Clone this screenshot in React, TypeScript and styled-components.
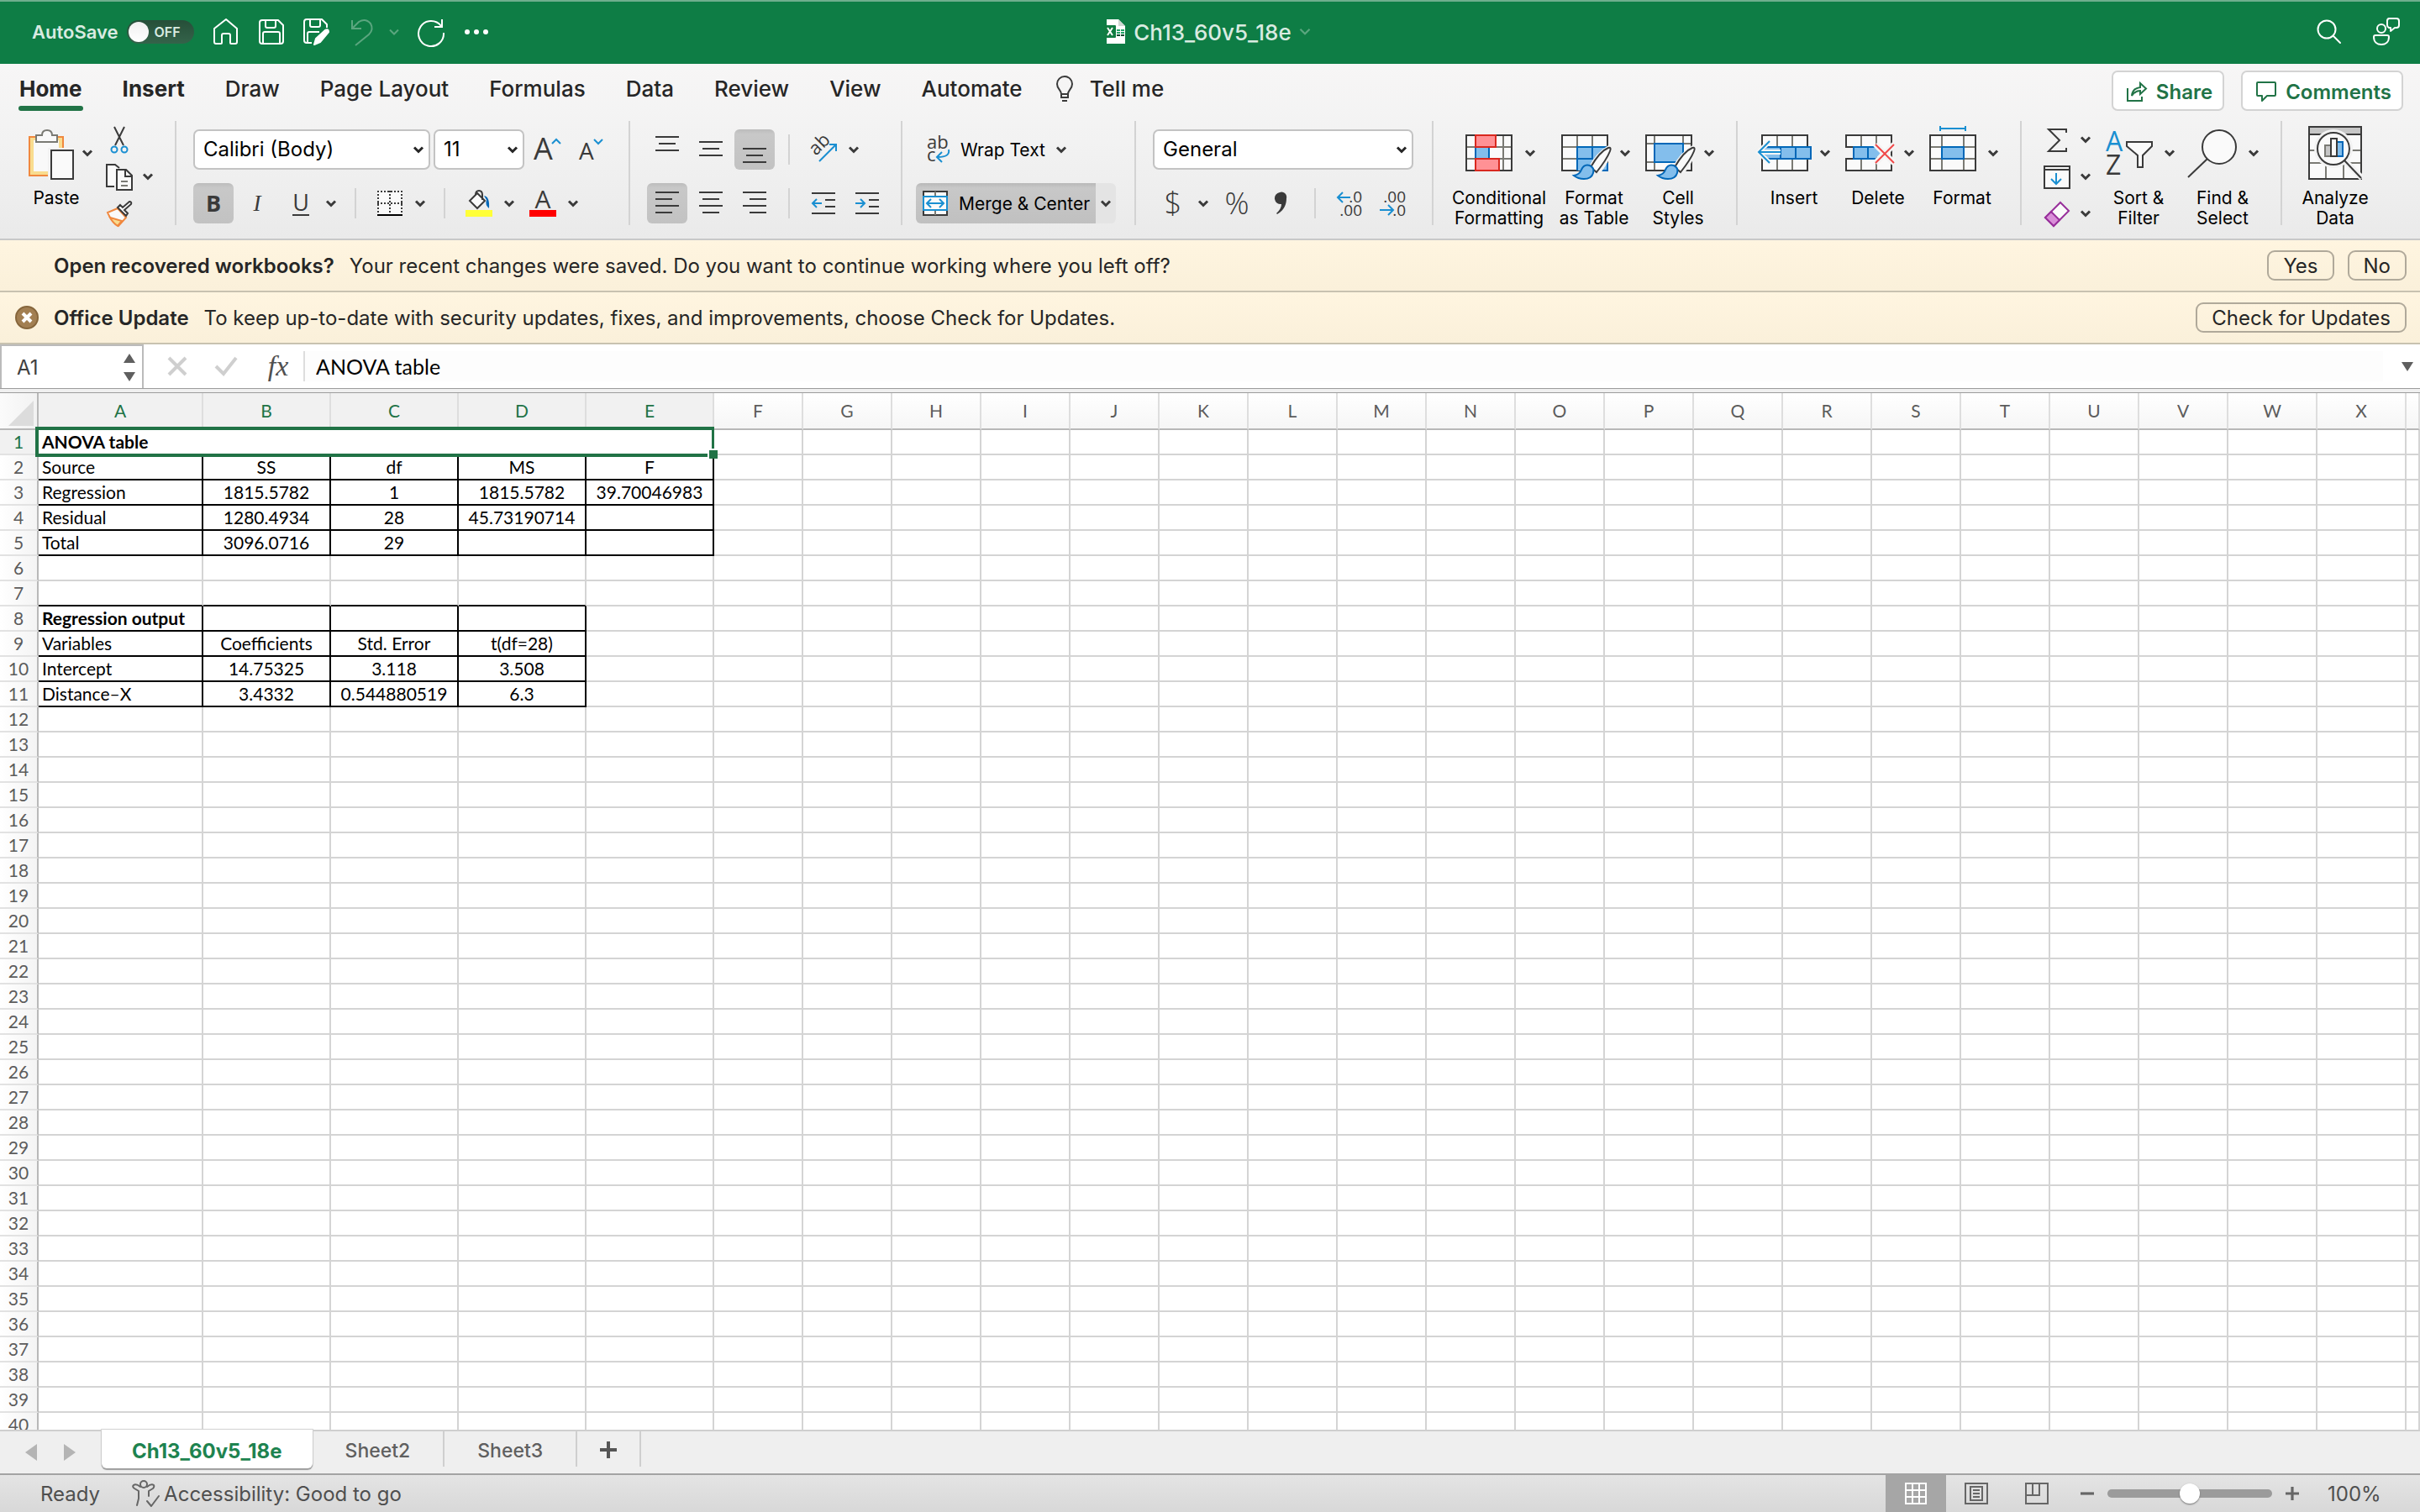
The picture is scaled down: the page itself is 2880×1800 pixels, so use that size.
import React from 'react';
import styled, { createGlobalStyle, css } from 'styled-components';

const UI = 'Inter, "Liberation Sans", sans-serif';
const CELL = 'Lato, "Liberation Sans", sans-serif';
const TOOL = '"Open Sans", "Noto Sans", sans-serif';
const GREEN = '#217346';
const INK = '#3a3a3a';
const BLUE = '#1a8fd1';
const EDGE = '#0067b8';
const SKY = '#83beec';

const GlobalStyle = createGlobalStyle`
  *, *::before, *::after { box-sizing: border-box; }
  body { margin: 0; font-family: ${UI}; font-size: 24px; color: #262626; background: #fff; }
  button, input, select { font: inherit; color: inherit; margin: 0; padding: 0; }
  button { border: 0; background: none; }
  svg { display: block; flex: none; overflow: visible; }
`;

/* ---------- window ---------- */

const Window = styled.div`
  display: flex;
  flex-direction: column;
  height: 100vh;
  overflow: hidden;
`;

const TitleBar = styled.header`
  display: grid;
  grid-template-columns: 1fr auto 1fr;
  align-items: center;
  height: 76px;
  flex: none;
  padding: 0 24px 0 38px;
  background: #0e7d45;
  box-shadow: inset 0 2px #6fae8d;
  color: #d9ebe1;
`;

const QuickAccess = styled.div`
  display: flex;
  align-items: center;
  gap: 22px;
`;

const AutoSave = styled.label`
  display: flex;
  align-items: center;
  gap: 10px;
  font-size: 22px;
  font-weight: 600;
`;

const Track = styled.span`
  display: flex;
  align-items: center;
  gap: 7px;
  width: 80px;
  height: 28px;
  padding: 0 2px;
  border-radius: 14px;
  background: linear-gradient(#264f39, #34634a);
  font-size: 16px;
`;

const Knob = styled.input`
  appearance: none;
  width: 24px;
  height: 24px;
  border-radius: 50%;
  background: linear-gradient(#f0f0f0, #fff);
`;

const IconButton = styled.button<{ $dim?: boolean }>`
  display: flex;
  align-items: center;
  justify-content: center;
  width: 32px;
  height: 36px;
  color: ${p => (p.$dim ? '#5ba67f' : '#fff')};
`;

const UndoPair = styled.div`
  display: flex;
  gap: 16px;
`;

const SmallArrow = styled(IconButton)`
  width: 12px;
`;

const DocTitle = styled.h1`
  display: flex;
  align-items: center;
  gap: 8px;
  margin: 0;
  padding-right: 20px;
  font-size: 26px;
  font-weight: 500;
`;

const TitleActions = styled.div`
  display: flex;
  justify-content: flex-end;
  gap: 36px;
`;

/* ---------- ribbon ---------- */

const Ribbon = styled.section`
  flex: none;
  height: 210px;
  background: linear-gradient(#f7f6f6, #f2f2f2 45%, #eaeaea);
  border-bottom: 2px solid #c8c8c8;
`;

const TabRow = styled.nav`
  display: flex;
  align-items: flex-start;
  height: 68px;
  padding: 0 20px 0 22px;
`;

const TabList = styled.div`
  display: flex;
  gap: 46px;
`;

const Tab = styled.button<{ $active?: boolean; $strong?: boolean }>`
  height: 56px;
  padding: 4px 1px 0;
  font-size: 26px;
  line-height: 30px;
  font-weight: ${p => (p.$active || p.$strong ? 700 : 500)};
  display: flex;
  align-items: center;
  gap: 19px;
  position: relative;
  white-space: nowrap;
  ${p =>
    p.$active &&
    css`
      &::after {
        content: '';
        position: absolute;
        left: 0;
        right: 0;
        bottom: 0;
        height: 6px;
        border-radius: 3px;
        background: ${GREEN};
      }
    `}
`;

const TellMe = styled(Tab)`
  margin-left: 37px;
`;

const TabActions = styled.div`
  display: flex;
  gap: 20px;
  margin-left: auto;
  padding-top: 8px;
`;

const OutlineButton = styled.button`
  display: flex;
  align-items: center;
  gap: 10px;
  height: 48px;
  padding: 2px 12px 0 15px;
  border: 2px solid #d3d3d3;
  border-radius: 7px;
  background: #fff;
  color: ${GREEN};
  font-size: 24px;
  font-weight: 600;
`;

const Groups = styled.div`
  display: flex;
  align-items: flex-start;
  height: 132px;
`;

const Group = styled.div<{ $left: number; $right: number; $gap?: number }>`
  display: flex;
  gap: ${p => p.$gap ?? 14}px;
  padding: 6px ${p => p.$right}px 0 ${p => p.$left}px;
`;

const GroupRule = styled.span`
  width: 2px;
  height: 124px;
  flex: none;
  background: #d3d3d3;
`;

const Rows = styled.div`
  display: flex;
  flex-direction: column;
  gap: 16px;
  padding-top: 4px;
`;

const Row = styled.div<{ $gap?: number }>`
  display: flex;
  align-items: center;
  gap: ${p => p.$gap ?? 4}px;
  height: 48px;
`;

const Stack = styled.div`
  display: flex;
  flex-direction: column;
  gap: 11px;
`;

const StackRow = styled.div`
  display: flex;
  align-items: center;
  gap: 12px;
  height: 33px;
`;

const PlainButton = styled.button`
  display: flex;
  align-items: center;
  justify-content: center;
`;

const ToolButton = styled.button<{ $on?: boolean; $bold?: boolean }>`
  display: flex;
  align-items: center;
  justify-content: center;
  width: 48px;
  height: 48px;
  flex: none;
  border-radius: 6px;
  color: ${INK};
  font-family: ${TOOL};
  font-size: 27px;
  font-weight: ${p => (p.$bold ? 700 : 400)};
  ${p => p.$on && css`background: linear-gradient(#bcbcbc, #c8c8c8 12%, #c2c2c2);`}
`;

const Glyph = styled.span<{ $italic?: boolean; $line?: boolean; $large?: boolean }>`
  line-height: 28px;
  font-family: ${p => (p.$italic ? '"Liberation Serif", serif' : 'inherit')};
  font-style: ${p => (p.$italic ? 'italic' : 'normal')};
  font-size: ${p => (p.$large ? 36 : 27)}px;
  font-weight: ${p => (p.$large ? 300 : 'inherit')};
  border-bottom: ${p => (p.$line ? '2px solid ' + INK : '0')};
`;

const Split = styled.div`
  display: flex;
  align-items: center;
`;

const Arrow = styled.button`
  display: flex;
  align-items: center;
  justify-content: center;
  width: 24px;
  height: 48px;
  color: ${INK};
`;

const RowRule = styled.span`
  width: 2px;
  height: 36px;
  margin: 0 12px;
  background: #d3d3d3;
`;

const Picker = styled.label<{ $width: number }>`
  display: block;
  position: relative;
  width: ${p => p.$width}px;
`;

const PickerArrow = styled.span`
  position: absolute;
  right: 8px;
  top: 20px;
  pointer-events: none;
`;

const Select = styled.select`
  appearance: none;
  width: 100%;
  height: 48px;
  padding: 0 30px 2px 10px;
  border: 2px solid #c3c3c3;
  border-radius: 7px;
  background: #fff;
  color: #000;
  font-size: 24px;
`;

const WideButton = styled.button<{ $on?: boolean }>`
  display: flex;
  align-items: center;
  gap: 13px;
  height: 48px;
  padding: 0 7px 0 8px;
  color: #000;
  font-size: 21px;
  white-space: nowrap;
  border-radius: 6px 0 0 6px;
  ${p => p.$on && css`background: linear-gradient(#b8b8b8, #c8c8c8 12%, #c0c0c0);`}
`;

const MergeArrow = styled(Arrow)`
  background: #e4e4e4;
  border-radius: 0 6px 6px 0;
`;

const Big = styled.button<{ $width?: number }>`
  display: flex;
  flex-direction: column;
  align-items: center;
  gap: 10px;
  width: ${p => p.$width ?? 86}px;
  color: #000;
  font-size: 21px;
  line-height: 24px;
`;

const BigFace = styled.span`
  display: flex;
  align-items: center;
  gap: 10px;
  color: ${INK};
`;

const BigLabel = styled.span`
  white-space: pre;
  text-align: center;
`;

/* ---------- message bars ---------- */

const MessageBar = styled.div`
  display: flex;
  align-items: center;
  gap: 18px;
  height: 62px;
  flex: none;
  padding: 0 16px 0 18px;
  background: linear-gradient(#fff5e0, #faf0da);
  border-bottom: 2px solid #c8c2b0;
  font-size: 24px;
  line-height: 28px;
`;

const MessageSlot = styled.button`
  width: 28px;
  height: 28px;
`;

const MessageTitle = styled.strong`
  padding-top: 2px;
  font-weight: 600;
`;

const MessageText = styled.span`
  padding-top: 2px;
`;

const MessageActions = styled.div`
  display: flex;
  gap: 16px;
  margin-left: auto;
`;

const PillButton = styled.button`
  height: 36px;
  padding: 1px 17px 0;
  border: 2px solid #b0a99a;
  border-radius: 9px;
  font-size: 24px;
  line-height: 31px;
`;

/* ---------- formula bar ---------- */

const FormulaBar = styled.div`
  display: flex;
  align-items: center;
  height: 52px;
  flex: none;
  background: #fff;
`;

const NameBox = styled.div`
  display: flex;
  align-items: center;
  width: 171px;
  height: 52px;
  padding: 0 8px 0 18px;
  border: 2px solid #bbb;
  border-bottom: 0;
  color: #404040;
`;

const NameInput = styled.input`
  flex: 1;
  min-width: 0;
  border: 0;
  outline: 0;
  background: none;
  font-size: 24px;
`;

const FormulaTools = styled.div`
  display: flex;
  align-items: center;
  gap: 32px;
  padding: 0 14px 0 28px;
`;

const FxButton = styled.button`
  width: 32px;
  color: #505050;
  font-family: "Liberation Serif", serif;
  font-style: italic;
  font-size: 34px;
  line-height: 40px;
`;

const FormulaInput = styled.input`
  flex: 1;
  min-width: 0;
  height: 36px;
  padding-left: 13px;
  border: 0;
  border-left: 2px solid #ddd;
  outline: 0;
  background: #fdfdfd;
  font-family: ${CELL};
  font-size: 25px;
  color: #000;
`;

const Expand = styled.button`
  padding: 0 8px 0 22px;
`;

const SplitBar = styled.div`
  height: 6px;
  flex: none;
  background: #f0f0f0;
  border-top: 1px solid #9c9c9c;
  border-bottom: 1px solid #9c9c9c;
`;

/* ---------- sheet ---------- */

const SheetArea = styled.main`
  flex: 1;
  min-height: 0;
  overflow: hidden;
`;

const Grid = styled.table`
  width: 100%;
  table-layout: fixed;
  border-collapse: separate;
  border-spacing: 0;
  font-family: ${CELL};
  font-size: 21px;
  line-height: 26px;
  color: #000;
`;

const ColumnHead = styled.th<{ $selected?: boolean }>`
  height: 44px;
  padding: 0;
  font-weight: 400;
  color: ${p => (p.$selected ? GREEN : '#5c5c5c')};
  background: ${p => (p.$selected ? '#f1f1f1' : 'linear-gradient(#fff, #f6f6f6)')};
  border-right: 2px solid #dedede;
  border-bottom: 2px solid #b8b8b8;
`;

const Corner = styled.td`
  padding: 0;
  background: linear-gradient(90deg, #fbfbfb, #f2f2f2);
  border-right: 2px solid #b8b8b8;
  border-bottom: 2px solid #b8b8b8;
`;

const RowHead = styled.th<{ $selected?: boolean }>`
  height: 30px;
  padding: 0;
  font-weight: 400;
  color: ${p => (p.$selected ? GREEN : '#5c5c5c')};
  background: ${p => (p.$selected ? '#f1f1f1' : 'linear-gradient(90deg, #fff, #f4f4f4)')};
  border-right: 2px solid #b8b8b8;
  border-bottom: 2px solid #e2e2e2;
`;

const Cell = styled.td<{ $right?: boolean; $bottom?: boolean; $left?: boolean; $bold?: boolean; $selected?: boolean }>`
  height: 30px;
  padding: ${p => (p.$left ? '0 0 0 4px' : '0')};
  overflow: ${p => (p.$selected ? 'visible' : 'hidden')};
  white-space: nowrap;
  text-align: ${p => (p.$left ? 'left' : 'center')};
  font-weight: ${p => (p.$bold ? 700 : 400)};
  border-right: 2px solid ${p => (p.$right ? '#000' : '#d4d4d4')};
  border-bottom: 2px solid ${p => (p.$bottom ? '#000' : '#d4d4d4')};
  ${p =>
    p.$selected &&
    css`
      position: relative;
      &::before {
        content: '';
        position: absolute;
        inset: -4px -2px -4px -4px;
        border: 4px solid ${GREEN};
        border-right-width: 3px;
      }
      &::after {
        content: '';
        position: absolute;
        right: -6px;
        bottom: -6px;
        width: 12px;
        height: 12px;
        background: ${GREEN};
        border: solid #fff;
        border-width: 2px 0 0 2px;
      }
    `}
`;

/* ---------- sheet tabs ---------- */

const TabStrip = styled.footer`
  display: flex;
  align-items: flex-start;
  height: 52px;
  flex: none;
  border-top: 2px solid #cfcfcf;
  background: #efefef;
`;

const TabArrows = styled.div`
  display: flex;
  align-items: center;
  gap: 32px;
  height: 50px;
  padding: 0 31px 0 30px;
`;

const SheetTab = styled.button<{ $active?: boolean }>`
  height: 42px;
  padding: 4px 39px 0;
  color: #5f5f5f;
  font-size: 23px;
  font-weight: 500;
  border-right: 2px solid #cfcfcf;
  ${p =>
    p.$active &&
    css`
      height: 46px;
      margin-top: -2px;
      padding: 4px 36px 0;
      background: #fff;
      color: #1e8350;
      font-size: 24px;
      font-weight: 700;
      border: 0;
      border-radius: 0 0 6px 6px;
      box-shadow: 0 2px 1px #9d9d9d, 0 0 1px 1px #d0d0d0;
    `}
`;

const AddTab = styled(SheetTab)`
  padding: 2px 27px 0;
`;

const StatusBar = styled.footer`
  display: flex;
  align-items: center;
  height: 46px;
  flex: none;
  padding-left: 48px;
  border-top: 2px solid #a3a3a3;
  background: linear-gradient(#e4e4e4, #d8d8d8);
  color: #4f4f4f;
  font-size: 24px;
`;

const Access = styled.button`
  display: flex;
  align-items: center;
  gap: 4px;
  margin-left: 38px;
`;

const ViewControls = styled.div`
  display: flex;
  align-items: center;
  margin-left: auto;
`;

const ViewButton = styled.button<{ $on?: boolean }>`
  display: flex;
  align-items: center;
  justify-content: center;
  width: 72px;
  height: 44px;
  background: ${p => (p.$on ? '#a6a6a6' : 'none')};
`;

const ZoomButton = styled.button`
  display: flex;
  align-items: center;
  justify-content: center;
  width: 48px;
  height: 44px;
`;

const ZoomSlider = styled.input`
  appearance: none;
  width: 196px;
  height: 26px;
  background: none;
  &::-webkit-slider-runnable-track {
    height: 10px;
    border-radius: 5px;
    background: #9b9b9b;
  }
  &::-webkit-slider-thumb {
    appearance: none;
    width: 24px;
    height: 24px;
    margin-top: -7px;
    border-radius: 50%;
    background: #fff;
    box-shadow: 0 1px 2px #707070;
  }
`;

const ZoomLevel = styled.span`
  width: 128px;
  padding-left: 18px;
`;

/* ---------- drawings ---------- */

const Chevron = ({ color = 'currentColor', thin = false, size = 12 }: { color?: string; thin?: boolean; size?: number }) => (
  <svg width={size} height={size === 12 ? 9 : 10} viewBox="0 0 12 9" fill="none" stroke={color} strokeWidth={thin ? 2 : 3}>
    <path d="M1 1.500l5 5 5-5" />
  </svg>
);

const Triangle = ({ dir, color = '#5f5f5f', w = 14, h = 11 }: { dir: 'up' | 'down' | 'left' | 'right'; color?: string; w?: number; h?: number }) => {
  const d = {
    up: `M0 ${h}L${w / 2} 0L${w} ${h}Z`,
    down: `M0 0H${w}L${w / 2} ${h}Z`,
    left: `M${w} 0V${h}L0 ${h / 2}Z`,
    right: `M0 0L${w} ${h / 2}L0 ${h}Z`,
  }[dir];
  return (
    <svg width={w} height={h} viewBox={`0 0 ${w} ${h}`}>
      <path d={d} fill={color} />
    </svg>
  );
};

const HomeIcon = () => (
  <svg width="30" height="32" viewBox="0 0 30 32" fill="none" stroke="#fff" strokeWidth="2" strokeLinejoin="round">
    <path d="M1 12L15 1l13 11v16a2 2 0 0 1-2 2h-5a1 1 0 0 1-1-1V20a2 2 0 0 0-2-2h-6a2 2 0 0 0-2 2v9a1 1 0 0 1-1 1H3a2 2 0 0 1-2-2z" />
  </svg>
);

const SaveIcon = () => (
  <svg width="30" height="30" viewBox="0 0 30 30" fill="none" stroke="#fff" strokeWidth="2" strokeLinejoin="round">
    <path d="M4 1h19l6 6v19a3 3 0 0 1-3 3H4a3 3 0 0 1-3-3V4a3 3 0 0 1 3-3z" />
    <path d="M8 1v7a2 2 0 0 0 2 2h8a2 2 0 0 0 2-2V1" />
    <path d="M5 29V17a2 2 0 0 1 2-2h16a2 2 0 0 1 2 2v12" />
  </svg>
);

const SaveAsIcon = () => (
  <svg width="32" height="32" viewBox="0 0 32 32" fill="none" stroke="#fff" strokeWidth="2" strokeLinejoin="round">
    <path d="M10 29H4a3 3 0 0 1-3-3V4a3 3 0 0 1 3-3h18l6 6v4" />
    <path d="M8 1v7a2 2 0 0 0 2 2h8a2 2 0 0 0 2-2V1" />
    <path d="M5 29V18a2 2 0 0 1 2-2h12" />
    <path d="M13 31l2-7 11-10q4-2 4 2L20 28z" fill="#fff" />
  </svg>
);

const UndoIcon = () => (
  <svg width="28" height="33" viewBox="0 0 28 33" fill="none" stroke="currentColor" strokeWidth="2">
    <path d="M2 2v10h11M2 12l8-8q8-5 14 2 4 7-2 13L6 32" />
  </svg>
);

const RedoIcon = () => (
  <svg width="34" height="33" viewBox="0 0 34 33" fill="none" stroke="#fff" strokeWidth="2">
    <path d="M30 1v9h-9M29 9A15 15 0 1 0 32 17" />
  </svg>
);

const DotsIcon = () => (
  <svg width="28" height="6" viewBox="0 0 28 6" fill="#fff">
    <circle cx="3" cy="3" r="3" />
    <circle cx="14" cy="3" r="3" />
    <circle cx="25" cy="3" r="3" />
  </svg>
);

const WorkbookIcon = () => (
  <svg width="28" height="30" viewBox="0 0 28 30">
    <path d="M4 0h14l8 8v21H4z" fill="#fff" />
    <path d="M18 0l8 8h-8z" fill="#cfd8d3" />
    <path d="M16 12h4v2h-4zM21 12h4v2h-4zM16 15h4v2h-4zM21 15h4v2h-4z" fill="#21a366" />
    <path d="M16 18h4v2h-4zM21 18h4v2h-4z" fill="#134a31" />
    <rect x="1" y="7" width="14" height="15" rx="1" fill="#107c41" />
    <path d="M5 10l6 9M11 10l-6 9" stroke="#fff" strokeWidth="2" />
  </svg>
);

const SearchIcon = () => (
  <svg width="30" height="30" viewBox="0 0 30 30" fill="none" stroke="#fff" strokeWidth="2" strokeLinecap="round">
    <circle cx="12" cy="12" r="10.500" />
    <path d="M19.500 19.500L28 28" />
  </svg>
);

const PresenceIcon = () => (
  <svg width="34" height="34" viewBox="0 0 34 34" fill="none" stroke="#fff" strokeWidth="2" strokeLinejoin="round">
    <circle cx="11" cy="13" r="5" />
    <path d="M4 21h14a2 2 0 0 1 2 2c0 6-4 9-9 9s-9-3-9-9a2 2 0 0 1 2-2z" />
    <path d="M20 1h9a3 3 0 0 1 3 3v5a3 3 0 0 1-3 3h-2l-5 4v-4h-2q-2-1-2-3V4a3 3 0 0 1 2-3z" />
  </svg>
);

const BulbIcon = () => (
  <svg width="22" height="32" viewBox="0 0 22 32" fill="none" stroke={INK} strokeWidth="2">
    <path d="M7 22c0-5-5-6-5-12a9 9 0 0 1 18 0c0 6-5 7-5 12zM7 22v4h8v-4M8 30h6" />
  </svg>
);

const ShareIcon = () => (
  <svg width="26" height="26" viewBox="0 0 26 26" fill="none" stroke={GREEN} strokeWidth="2">
    <path d="M2 9v15h17v-5M7 18q1-9 10-10V3l7 6.500-7 6.500v-4q-6 0-10 6z" />
  </svg>
);

const CommentIcon = () => (
  <svg width="26" height="26" viewBox="0 0 26 26" fill="none" stroke={GREEN} strokeWidth="2" strokeLinejoin="round">
    <path d="M3 2h20a1 1 0 0 1 1 1v14a1 1 0 0 1-1 1h-9l-6 6v-6H3a1 1 0 0 1-1-1V3a1 1 0 0 1 1-1z" />
  </svg>
);

const BigSvg = ({ children }: { children: React.ReactNode }) => (
  <svg width="64" height="64" viewBox="0 0 64 64" fill="none" stroke={INK} strokeWidth="2">
    {children}
  </svg>
);

const PasteIcon = () => (
  <BigSvg>
    <path d="M11 13h40v46H11z" fill="#f9dc8f" stroke="#f0883e" />
    <path d="M16 17h30v37H16z" fill="#f9f9f9" stroke="none" />
    <path d="M19 19v-8h7q0-6 6-6t6 6h6v8z" fill="#f9f9f9" stroke="#7a7a74" />
    <path d="M33 26h31v38H33z" fill="#f2f2f2" stroke="none" />
    <path d="M37 29h26v34H37z" fill="#fafafa" />
  </BigSvg>
);

const CutIcon = () => (
  <svg width="32" height="32" viewBox="0 0 32 32" fill="none" strokeWidth="2">
    <path d="M10 0l11 22M22 0L11 22" stroke={INK} />
    <circle cx="10" cy="27" r="3.500" stroke={BLUE} />
    <circle cx="22" cy="27" r="3.500" stroke={BLUE} />
  </svg>
);

const CopyIcon = () => (
  <svg width="32" height="32" viewBox="0 0 32 32" fill="none" stroke={INK} strokeWidth="2">
    <path d="M10 27H1V1h10l5 4" fill="#fafafa" />
    <path d="M13 7h11l7 7v17H13z" fill="#fafafa" />
    <path d="M23 7v8h8" />
    <path d="M18 21h8M18 26h8" stroke="#7a7a74" />
  </svg>
);

const PainterIcon = () => (
  <svg width="32" height="32" viewBox="0 0 32 32" fill="none" strokeWidth="2">
    <path d="M14 9L2 14q4 10 13 16l9-10z" fill="#fafafa" stroke="#f0883e" />
    <path d="M5 20l14 4-5 6q-6-4-9-10z" fill="#f9dc8f" stroke="#f0883e" />
    <path d="M14 8l10 10 2-3-4-4 8-7q1-3-2-3l-8 7-3-3z" fill="#fafafa" stroke={INK} />
  </svg>
);

const FontSize = ({ up }: { up?: boolean }) => (
  <svg width="34" height="34" viewBox="0 0 34 34">
    <text x={up ? 0 : 2} y="29" fontFamily={TOOL} fontSize={up ? 36 : 28} fill={INK}>
      A
    </text>
    <path d={up ? 'M22 10l5-5 5 5' : 'M20 5l5 5 5-5'} fill="none" stroke={BLUE} strokeWidth="2" />
  </svg>
);

const BordersIcon = () => (
  <svg width="30" height="30" viewBox="0 0 30 30" fill="none" stroke={INK} strokeWidth="2">
    <path d="M0 0h30v30H0z" fill="#fafafa" stroke="none" />
    <path d="M0 1h30M0 15h30" strokeDasharray="2 2" />
    <path d="M1 0v28M15 0v28M29 0v28" strokeDasharray="2 2" />
    <path d="M0 29h30" stroke="#000" />
  </svg>
);

const FillIcon = () => (
  <svg width="32" height="32" viewBox="0 0 32 32" fill="none" strokeWidth="2">
    <path d="M14 4L5 13l9 9 9-9z" fill="#fafafa" stroke={INK} />
    <path d="M12 6q0-5 4-5t4 5v6" stroke={INK} />
    <path d="M22 7q7 1 6 15-5-4-3-10z" fill={EDGE} />
    <path d="M0 24h32v8H0z" fill="#ffff38" />
  </svg>
);

const FontColorIcon = () => (
  <svg width="32" height="32" viewBox="0 0 32 32">
    <text x="16" y="22" textAnchor="middle" fontFamily={TOOL} fontSize="30" fill={INK}>
      A
    </text>
    <path d="M0 24h32v8H0z" fill="#f00" />
  </svg>
);

const Lines = ({ rows }: { rows: [number, number, number][] }) => (
  <svg width="28" height="32" viewBox="0 0 28 32" stroke={INK} strokeWidth="2">
    {rows.map(([y, a, b]) => (
      <path key={y} d={`M${a} ${y}H${b}`} />
    ))}
  </svg>
);

const OrientIcon = () => (
  <svg width="34" height="32" viewBox="0 0 34 32">
    <text x="8" y="24" transform="rotate(-45 8 24)" fontFamily={TOOL} fontSize="22" fill={INK}>
      ab
    </text>
    <path d="M12 30L32 10M24 10h8v8" fill="none" stroke={BLUE} strokeWidth="2" />
  </svg>
);

const IndentIcon = ({ out }: { out?: boolean }) => (
  <svg width="28" height="28" viewBox="0 0 28 28" fill="none" stroke={INK} strokeWidth="2">
    <path d="M0 2h28M16 10h12M16 18h12M0 26h28" />
    <path d={out ? 'M12 14H1M6 9l-5 5 5 5' : 'M0 14h11M6 9l5 5-5 5'} stroke={BLUE} />
  </svg>
);

const WrapIcon = () => (
  <svg width="32" height="34" viewBox="0 0 32 34">
    <g fontFamily={TOOL} fontSize="22" fill={INK}>
      <text x="5" y="16">ab</text>
      <text x="5" y="31">c</text>
    </g>
    <path d="M31 17q2 9-13 9M23 20l-6 6 6 6" fill="none" stroke={BLUE} strokeWidth="2" />
  </svg>
);

const MergeIcon = () => (
  <svg width="30" height="30" viewBox="0 0 30 30" fill="none" stroke={INK} strokeWidth="2">
    <path d="M1 1h28v28H1z" fill="#fafafa" />
    <path d="M15 1v6M15 23v6" stroke="#7a7a74" />
    <path d="M1 7h28v16H1z" fill="#fafafa" stroke={BLUE} />
    <path d="M5 15h20M10 10l-5 5 5 5M20 10l5 5-5 5" stroke={BLUE} />
  </svg>
);

const DecimalIcon = ({ more }: { more?: boolean }) => (
  <svg width="32" height="32" viewBox="0 0 32 32">
    <g fontFamily={TOOL} fontSize="19" fill={INK} textAnchor="end">
      <text x="31" y="15">{more ? '.0' : '.00'}</text>
      <text x="31" y="31">{more ? '.00' : '.0'}</text>
    </g>
    <path
      d={more ? 'M17 9H2M8 3L2 9l6 6' : 'M0 24h15M10 18l6 6-6 6'}
      fill="none"
      stroke={BLUE}
      strokeWidth="2"
    />
  </svg>
);

const ConditionalIcon = () => (
  <BigSvg>
    <path d="M4 11h54v42H4z" fill="#fafafa" />
    <path d="M4 25h54M4 39h54M48 11v42" stroke="#7a7a74" />
    <path d="M4 11h54v42H4z" />
    <path d="M15 26h32v12H15z" fill="#fafafa" stroke="none" />
    <path d="M15 25h16v14H15z" fill={SKY} stroke={EDGE} />
    <path d="M15 11h24v14H15zM15 39h28v14H15z" fill="#ff9195" stroke="#d9281f" />
  </BigSvg>
);

const Brush = () => (
  <>
    <path d="M40 50Q48 34 62 26M62 26Q60 38 48 54" stroke="#f4f4f4" strokeWidth="7" />
    <path d="M39 49Q50 30 60 26q4-1 2 4-4 10-16 25z" fill="#fafafa" />
    <path d="M19 59q7-1 9-7 3-7 10-5 6 3 4 9-2 7-11 7-7 0-12-4z" fill={SKY} stroke={EDGE} />
  </>
);

const TableFormatIcon = () => (
  <BigSvg>
    <path d="M5 11h54v42H5z" fill="#fafafa" />
    <path d="M5 25h54M5 39h54M23 11v42M41 11v42" stroke="#7a7a74" />
    <path d="M5 11h54v42H5z" />
    <path d="M23 25h36v28H23z" fill={SKY} stroke="none" />
    <path d="M23 53V25h18v14H23M41 25h18M59 44v9h-9" stroke={EDGE} />
    <Brush />
  </BigSvg>
);

const CellStylesIcon = () => (
  <BigSvg>
    <path d="M5 11h54v42H5z" fill="#fafafa" />
    <path d="M5 21h54M5 43h54M15 11v42M49 11v42" stroke="#7a7a74" />
    <path d="M5 11h54v42H5z" />
    <path d="M15 21h34v22H15z" fill={SKY} stroke={EDGE} />
    <Brush />
  </BigSvg>
);

const InsertIcon = () => (
  <BigSvg>
    <path d="M5 11h54v42H5z" fill="#fafafa" />
    <path d="M23 11v42M41 11v42" stroke="#7a7a74" />
    <path d="M5 11h54v42H5z" />
    <path d="M8 25h55v14H8z" fill={SKY} stroke={EDGE} />
    <path d="M27 25v14M45 25v14" stroke={EDGE} />
    <path d="M27 31H2M14 18L1 31l13 13" stroke="#f6f6f6" strokeWidth="6" />
    <path d="M27 31H2M14 18L1 31l13 13" stroke={BLUE} />
  </BigSvg>
);

const DeleteIcon = () => (
  <BigSvg>
    <path d="M5 11h54v42H5z" fill="#fafafa" />
    <path d="M23 11v42M41 11v42" stroke="#7a7a74" />
    <path d="M5 11h54v42H5z" />
    <path d="M2 26h12v12H2z" fill="#f2f2f2" stroke="none" />
    <path d="M4 25h10M4 39h10" />
    <path d="M40 25l6 7-6 7H14V25z" fill={SKY} stroke="none" />
    <path d="M40 25H14v14h26M31 25v14" stroke={EDGE} />
    <path d="M40 22l22 22M62 22L40 44" stroke="#f4f4f4" strokeWidth="7" />
    <path d="M40 22l22 22M62 22L40 44" stroke="#f04848" />
  </BigSvg>
);

const FormatIcon = () => (
  <BigSvg>
    <path d="M5 11h54v42H5z" fill="#fafafa" />
    <path d="M5 25h54M5 39h54M19 11v42M45 11v42" stroke="#7a7a74" />
    <path d="M5 11h54v42H5z" />
    <path d="M19 25h26v14H19z" fill={SKY} stroke={EDGE} />
    <path d="M17 0v6M47 0v6M17 3h30" stroke={BLUE} />
  </BigSvg>
);

const SumIcon = () => (
  <svg width="32" height="32" viewBox="0 0 32 32" fill="none" stroke={INK} strokeWidth="2">
    <path d="M27 7V3H6l13 13L6 29h21v-4" />
  </svg>
);

const FillDownIcon = () => (
  <svg width="32" height="32" viewBox="0 0 32 32" fill="none" stroke={INK} strokeWidth="2">
    <path d="M1 3h30v26H1z" fill="#fafafa" />
    <path d="M1 7h30" />
    <path d="M15 11v13M9 18l6 6 6-6" stroke={BLUE} />
  </svg>
);

const EraserIcon = () => (
  <svg width="32" height="32" viewBox="0 0 32 32" fill="none" stroke="#982f9b" strokeWidth="2">
    <path d="M20 2l10 10-18 18L2 20z" fill="#fafafa" />
    <path d="M9 13l10 10-7 7L2 20z" fill="#d98fd8" />
  </svg>
);

const SortIcon = () => (
  <BigSvg>
    <g fontFamily={TOOL} fontSize="32" stroke="none">
      <text x="4" y="30" fill={BLUE}>A</text>
      <text x="4" y="58" fill={INK}>Z</text>
    </g>
    <path d="M29 19h30v5L48 35v14h-6V35L29 24z" fill="#fafafa" />
  </BigSvg>
);

const FindIcon = () => (
  <BigSvg>
    <circle cx="39" cy="25" r="20" fill="#fafafa" />
    <path d="M25 39L2 61" />
  </BigSvg>
);

const AnalyzeIcon = () => (
  <BigSvg>
    <path d="M1 1h62v62H1z" fill="#fafafa" />
    <path d="M1 1h62v10H1z" fill="#c6c6c6" stroke="none" />
    <path d="M1 29h62M1 44h62M21 44v19M42 44v19" stroke="#7a7a74" />
    <path d="M1 10h62M1 1h62v62H1z" />
    <circle cx="30" cy="27" r="23" fill="#f2f2f2" stroke="none" />
    <path d="M42 40l22 22" stroke="#f2f2f2" strokeWidth="7" />
    <circle cx="30" cy="27" r="19" fill="#fafafa" />
    <path d="M43 41l20 21" />
    <path d="M20 23h7v13h-7z" fill="#c6c6c6" stroke="#7a7a74" />
    <path d="M34 19h7v17h-7z" fill={SKY} stroke={EDGE} />
    <path d="M27 15h7v21h-7z" fill="#fafafa" />
  </BigSvg>
);

const CloseBadge = () => (
  <svg width="28" height="28" viewBox="0 0 28 28">
    <circle cx="14" cy="14" r="13" fill="#a27f52" stroke="#86663c" strokeWidth="2" />
    <path d="M9 9l10 10M19 9L9 19" stroke="#fff" strokeWidth="4" />
  </svg>
);

const CancelIcon = () => (
  <svg width="24" height="24" viewBox="0 0 24 24" stroke="#cfcfcf" strokeWidth="4">
    <path d="M2 2l20 20M22 2L2 22" />
  </svg>
);

const AcceptIcon = () => (
  <svg width="28" height="24" viewBox="0 0 28 24" fill="none" stroke="#cfcfcf" strokeWidth="4">
    <path d="M2 12l9 9L26 2" />
  </svg>
);

const AccessIcon = () => (
  <svg width="34" height="32" viewBox="0 0 34 32" fill="none" stroke="#666" strokeWidth="2" strokeLinecap="round" strokeLinejoin="round">
    <circle cx="14" cy="5" r="4" />
    <path d="M10 8Q5 4 2 6q-2 2 1 4l5 3v9l-2 8M18 8q5-4 8-2 1 2-1 4l-5 3v6M18 25l5 6 9-12" />
  </svg>
);

const NormalViewIcon = () => (
  <svg width="26" height="26" viewBox="0 0 26 26" fill="none" stroke="#fff" strokeWidth="2">
    <path d="M1 1h24v24H1zM9 1v24M17 1v24M1 9h24M1 17h24" />
  </svg>
);

const PageViewIcon = () => (
  <svg width="28" height="26" viewBox="0 0 28 26" fill="none" stroke="#666" strokeWidth="2">
    <path d="M1 1h26v24H1zM7 5h14v16H7zM10 9h8M10 13h8M10 17h8" />
  </svg>
);

const BreakViewIcon = () => (
  <svg width="28" height="26" viewBox="0 0 28 26" fill="none" stroke="#666" strokeWidth="2">
    <path d="M1 1h26v24H1zM1 15h16V1M9 1v14" />
  </svg>
);

const Plus = ({ size, minus, color = '#666' }: { size: number; minus?: boolean; color?: string }) => (
  <svg width={size} height={size} viewBox="0 0 20 20" stroke={color} strokeWidth="4">
    <path d={minus ? 'M0 10h20' : 'M0 10h20M10 0v20'} />
  </svg>
);

/* ---------- composed parts ---------- */

const BigButton = ({ label, icon, width, flat }: { label: string; icon: React.ReactNode; width?: number; flat?: boolean }) => (
  <Big $width={width}>
    <BigFace>
      {icon}
      {!flat && <Chevron />}
    </BigFace>
    <BigLabel>{label}</BigLabel>
  </Big>
);

const Dropdown = ({ label, value, width }: { label: string; value: string; width: number }) => (
  <Picker $width={width}>
    <Select aria-label={label} defaultValue={value}>
      <option>{value}</option>
    </Select>
    <PickerArrow>
      <Chevron />
    </PickerArrow>
  </Picker>
);

const SplitButton = ({ label, children }: { label: string; children: React.ReactNode }) => (
  <Split>
    <ToolButton aria-label={label}>{children}</ToolButton>
    <Arrow aria-label={label + ' options'}>
      <Chevron />
    </Arrow>
  </Split>
);

const tabs = ['Home', 'Insert', 'Draw', 'Page Layout', 'Formulas', 'Data', 'Review', 'View', 'Automate'];

const vertical: { label: string; rows: [number, number, number][]; on?: boolean }[] = [
  { label: 'Top Align', rows: [[1, 0, 28], [9, 4, 24], [17, 0, 28]] },
  { label: 'Middle Align', rows: [[7, 0, 28], [15, 4, 24], [23, 0, 28]] },
  { label: 'Bottom Align', rows: [[15, 0, 28], [23, 4, 24], [31, 0, 28]], on: true },
];

const horizontal: { label: string; rows: [number, number, number][]; on?: boolean }[] = [
  { label: 'Align Left', rows: [[3, 0, 28], [11, 0, 20], [19, 0, 28], [27, 0, 20]], on: true },
  { label: 'Center', rows: [[3, 0, 28], [11, 4, 24], [19, 0, 28], [27, 4, 24]] },
  { label: 'Align Right', rows: [[3, 0, 28], [11, 8, 28], [19, 0, 28], [27, 8, 28]] },
];

const columns = 'ABCDEFGHIJKLMNOPQRSTUVWX'.split('');
const rowCount = 40;

const data: Record<number, string[]> = {
  2: ['Source', 'SS', 'df', 'MS', 'F'],
  3: ['Regression', '1815.5782', '1', '1815.5782', '39.70046983'],
  4: ['Residual', '1280.4934', '28', '45.73190714', ''],
  5: ['Total', '3096.0716', '29', '', ''],
  8: ['Regression output', '', '', ''],
  9: ['Variables', 'Coefficients', 'Std. Error', 't(df=28)'],
  10: ['Intercept', '14.75325', '3.118', '3.508'],
  11: ['Distance–X', '3.4332', '0.544880519', '6.3'],
};

const widthOf = (i: number) => (i === 0 ? 196 : i < 5 ? 152 : 106);
const boxed = (row: number, col: number) =>
  (row >= 2 && row <= 5 && col < 5) || (row >= 8 && row <= 11 && col < 4);

const SheetRow = ({ row }: { row: number }) => (
  <tr>
    <RowHead scope="row" $selected={row === 1}>{row}</RowHead>
    {row === 1 && (
      <Cell colSpan={5} $left $bold $selected>
        ANOVA table
      </Cell>
    )}
    {columns.map((name, col) =>
      row === 1 && col < 5 ? null : (
        <Cell
          key={name}
          $left={col === 0}
          $bold={row === 8}
          $right={boxed(row, col)}
          $bottom={boxed(row, col) || boxed(row + 1, col)}
        >
          {data[row]?.[col]}
        </Cell>
      )
    )}
    <Cell />
  </tr>
);

export default function App() {
  return (
    <Window>
      <GlobalStyle />
      <TitleBar>
        <QuickAccess>
          <AutoSave>
            AutoSave
            <Track>
              <Knob type="checkbox" role="switch" />
              OFF
            </Track>
          </AutoSave>
          <IconButton aria-label="Home"><HomeIcon /></IconButton>
          <IconButton aria-label="Save"><SaveIcon /></IconButton>
          <IconButton aria-label="Save As"><SaveAsIcon /></IconButton>
          <UndoPair>
            <IconButton aria-label="Undo" $dim><UndoIcon /></IconButton>
            <SmallArrow aria-label="Undo history" $dim><Chevron thin /></SmallArrow>
          </UndoPair>
          <IconButton aria-label="Redo"><RedoIcon /></IconButton>
          <IconButton aria-label="More"><DotsIcon /></IconButton>
        </QuickAccess>
        <DocTitle>
          <WorkbookIcon />
          Ch13_60v5_18e
          <Chevron thin size={16} color="#5ba67f" />
        </DocTitle>
        <TitleActions>
          <IconButton aria-label="Search"><SearchIcon /></IconButton>
          <IconButton aria-label="Presence"><PresenceIcon /></IconButton>
        </TitleActions>
      </TitleBar>

      <Ribbon>
        <TabRow>
          <TabList>
            {tabs.map((t, i) => (
              <Tab key={t} $active={i === 0} $strong={i === 1}>{t}</Tab>
            ))}
          </TabList>
          <TellMe><BulbIcon />Tell me</TellMe>
          <TabActions>
            <OutlineButton><ShareIcon />Share</OutlineButton>
            <OutlineButton><CommentIcon />Comments</OutlineButton>
          </TabActions>
        </TabRow>

        <Groups>
          <Group $left={24} $right={26} $gap={16}>
            <BigButton label="Paste" icon={<PasteIcon />} />
            <Stack>
              <StackRow><PlainButton aria-label="Cut"><CutIcon /></PlainButton></StackRow>
              <StackRow>
                <PlainButton aria-label="Copy"><CopyIcon /></PlainButton>
                <PlainButton aria-label="Copy options"><Chevron color={INK} /></PlainButton>
              </StackRow>
              <StackRow><PlainButton aria-label="Format Painter"><PainterIcon /></PlainButton></StackRow>
            </Stack>
          </Group>
          <GroupRule />

          <Group $left={20} $right={20}>
            <Rows>
              <Row>
                <Dropdown label="Font" value="Calibri (Body)" width={282} />
                <Dropdown label="Font Size" value="11" width={108} />
                <ToolButton aria-label="Increase Font Size"><FontSize up /></ToolButton>
                <ToolButton aria-label="Decrease Font Size"><FontSize /></ToolButton>
              </Row>
              <Row>
                <ToolButton $on $bold aria-label="Bold"><Glyph>B</Glyph></ToolButton>
                <ToolButton aria-label="Italic"><Glyph $italic>I</Glyph></ToolButton>
                <SplitButton label="Underline"><Glyph $line>U</Glyph></SplitButton>
                <RowRule />
                <SplitButton label="Borders"><BordersIcon /></SplitButton>
                <RowRule />
                <SplitButton label="Fill Color"><FillIcon /></SplitButton>
                <SplitButton label="Font Color"><FontColorIcon /></SplitButton>
              </Row>
            </Rows>
          </Group>
          <GroupRule />

          <Group $left={20} $right={16}>
            <Rows>
              <Row>
                {vertical.map(v => (
                  <ToolButton key={v.label} aria-label={v.label} $on={v.on}><Lines rows={v.rows} /></ToolButton>
                ))}
                <RowRule />
                <SplitButton label="Orientation"><OrientIcon /></SplitButton>
              </Row>
              <Row>
                {horizontal.map(h => (
                  <ToolButton key={h.label} aria-label={h.label} $on={h.on}><Lines rows={h.rows} /></ToolButton>
                ))}
                <RowRule />
                <ToolButton aria-label="Decrease Indent"><IndentIcon out /></ToolButton>
                <ToolButton aria-label="Increase Indent"><IndentIcon /></ToolButton>
              </Row>
            </Rows>
          </Group>
          <GroupRule />

          <Group $left={16} $right={22}>
            <Rows>
              <Row $gap={0}>
                <WideButton><WrapIcon />Wrap Text</WideButton>
                <Arrow aria-label="Wrap options"><Chevron /></Arrow>
              </Row>
              <Row $gap={0}>
                <WideButton $on><MergeIcon />Merge &amp; Center</WideButton>
                <MergeArrow aria-label="Merge options"><Chevron /></MergeArrow>
              </Row>
            </Rows>
          </Group>
          <GroupRule />

          <Group $left={20} $right={22}>
            <Rows>
              <Row><Dropdown label="Number Format" value="General" width={310} /></Row>
              <Row>
                <SplitButton label="Currency"><Glyph $large>$</Glyph></SplitButton>
                <ToolButton aria-label="Percent"><Glyph $large>%</Glyph></ToolButton>
                <ToolButton aria-label="Comma">
                  <svg width="14" height="26" viewBox="0 0 14 26" fill={INK}>
                    <path d="M6 0a6 6 0 0 1 8 7c0 9-4 15-11 19l-1-1c4-4 6-7 6-11A7 7 0 1 1 6 0z" />
                  </svg>
                </ToolButton>
                <RowRule />
                <ToolButton aria-label="Increase Decimal"><DecimalIcon more /></ToolButton>
                <ToolButton aria-label="Decrease Decimal"><DecimalIcon /></ToolButton>
              </Row>
            </Rows>
          </Group>
          <GroupRule />

          <Group $left={22} $right={26}>
            <BigButton label={'Conditional\nFormatting'} icon={<ConditionalIcon />} width={112} />
            <BigButton label={'Format\nas Table'} icon={<TableFormatIcon />} />
            <BigButton label={'Cell\nStyles'} icon={<CellStylesIcon />} />
          </Group>
          <GroupRule />

          <Group $left={24} $right={26}>
            <BigButton label="Insert" icon={<InsertIcon />} />
            <BigButton label="Delete" icon={<DeleteIcon />} />
            <BigButton label="Format" icon={<FormatIcon />} />
          </Group>
          <GroupRule />

          <Group $left={26} $right={26}>
            <Stack>
              {[
                { label: 'AutoSum', icon: <SumIcon /> },
                { label: 'Fill', icon: <FillDownIcon /> },
                { label: 'Clear', icon: <EraserIcon /> },
              ].map(item => (
                <StackRow key={item.label}>
                  <PlainButton aria-label={item.label}>{item.icon}</PlainButton>
                  <PlainButton aria-label={item.label + ' options'}><Chevron color={INK} /></PlainButton>
                </StackRow>
              ))}
            </Stack>
            <BigButton label={'Sort &\nFilter'} icon={<SortIcon />} />
            <BigButton label={'Find &\nSelect'} icon={<FindIcon />} />
          </Group>
          <GroupRule />

          <Group $left={20} $right={20}>
            <BigButton label={'Analyze\nData'} icon={<AnalyzeIcon />} flat />
          </Group>
        </Groups>
      </Ribbon>

      <MessageBar>
        <MessageSlot as="span" />
        <MessageTitle>Open recovered workbooks?</MessageTitle>
        <MessageText>Your recent changes were saved. Do you want to continue working where you left off?</MessageText>
        <MessageActions>
          <PillButton>Yes</PillButton>
          <PillButton>No</PillButton>
        </MessageActions>
      </MessageBar>
      <MessageBar>
        <MessageSlot aria-label="Dismiss"><CloseBadge /></MessageSlot>
        <MessageTitle>Office Update</MessageTitle>
        <MessageText>To keep up-to-date with security updates, fixes, and improvements, choose Check for Updates.</MessageText>
        <MessageActions>
          <PillButton>Check for Updates</PillButton>
        </MessageActions>
      </MessageBar>

      <FormulaBar>
        <NameBox>
          <NameInput aria-label="Name Box" defaultValue="A1" />
          <Stack>
            <PlainButton aria-label="Previous name"><Triangle dir="up" /></PlainButton>
            <PlainButton aria-label="Next name"><Triangle dir="down" /></PlainButton>
          </Stack>
        </NameBox>
        <FormulaTools>
          <PlainButton aria-label="Cancel"><CancelIcon /></PlainButton>
          <PlainButton aria-label="Enter"><AcceptIcon /></PlainButton>
          <FxButton aria-label="Insert Function">fx</FxButton>
        </FormulaTools>
        <FormulaInput aria-label="Formula" defaultValue="ANOVA table" />
        <Expand aria-label="Expand formula bar"><Triangle dir="down" /></Expand>
      </FormulaBar>
      <SplitBar />

      <SheetArea>
        <Grid>
          <colgroup>
            <col width={46} />
            {columns.map((c, i) => (
              <col key={c} width={widthOf(i)} />
            ))}
            <col />
          </colgroup>
          <thead>
            <tr>
              <Corner>
                <svg width="44" height="40" viewBox="0 0 44 40">
                  <path d="M40 8v30H10z" fill="#dcdcdc" />
                </svg>
              </Corner>
              {columns.map((c, i) => (
                <ColumnHead key={c} scope="col" $selected={i < 5}>{c}</ColumnHead>
              ))}
              <ColumnHead as="td" />
            </tr>
          </thead>
          <tbody>
            {Array.from({ length: rowCount }, (_, i) => (
              <SheetRow key={i} row={i + 1} />
            ))}
          </tbody>
        </Grid>
      </SheetArea>

      <TabStrip>
        <TabArrows>
          <PlainButton aria-label="Previous sheet"><Triangle dir="left" color="#b4b4b4" w={14} h={20} /></PlainButton>
          <PlainButton aria-label="Next sheet"><Triangle dir="right" color="#b4b4b4" w={14} h={20} /></PlainButton>
        </TabArrows>
        <SheetTab $active>Ch13_60v5_18e</SheetTab>
        <SheetTab>Sheet2</SheetTab>
        <SheetTab>Sheet3</SheetTab>
        <AddTab aria-label="Add sheet"><Plus size={20} color="#555" /></AddTab>
      </TabStrip>
      <StatusBar>
        <span>Ready</span>
        <Access><AccessIcon />Accessibility: Good to go</Access>
        <ViewControls>
          <ViewButton $on aria-label="Normal View"><NormalViewIcon /></ViewButton>
          <ViewButton aria-label="Page Layout View"><PageViewIcon /></ViewButton>
          <ViewButton aria-label="Page Break Preview"><BreakViewIcon /></ViewButton>
          <ZoomButton aria-label="Zoom Out"><Plus size={16} minus /></ZoomButton>
          <ZoomSlider type="range" aria-label="Zoom" min={0} max={100} defaultValue={50} />
          <ZoomButton aria-label="Zoom In"><Plus size={16} /></ZoomButton>
          <ZoomLevel>100%</ZoomLevel>
        </ViewControls>
      </StatusBar>
    </Window>
  );
}
